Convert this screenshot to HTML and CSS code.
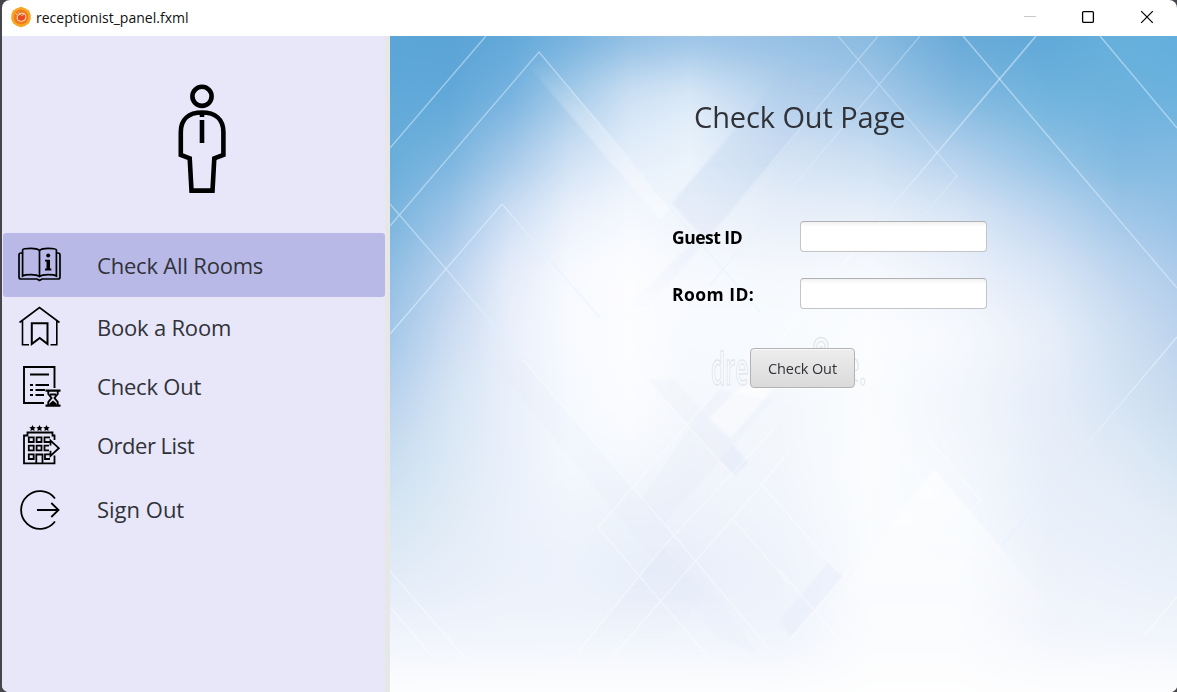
FILE: index.html
```
<!DOCTYPE html>
<html lang="en">
<head>
<meta charset="utf-8">
<title>receptionist_panel.fxml</title>
<link rel="stylesheet" href="styles.css">
</head>
<body>
<div class="window">
  <header class="titlebar">
    <svg class="app-icon" width="22" height="22" viewBox="0 0 22 22">
      <path d="M11 .8 15 2.200 19 4.600 20.600 8.500 20.800 13 19 17.300 15 20 11 21.200 7 20 3 17.300 1.200 13 1.400 8.500 3 4.600 7 2.200Z" fill="#f6a623"/>
      <circle cx="11" cy="11" r="7.300" fill="#f0781e"/>
      <path d="M5.500 7.500 8 9.500Q11 6 14.500 7.500 17 10 15 14 11.500 16.500 8 14.500 6.500 12 7.500 10" fill="#ea4a1c" stroke="#ffe9c8" stroke-width="1"/>
      <path d="M8 6 11.500 9.500 14 8.500" fill="none" stroke="#ffd9a8" stroke-width=".8"/>
    </svg>
    <span class="title">receptionist_panel.fxml</span>
    <div class="controls">
      <svg width="14" height="14" viewBox="0 0 14 14"><path d="M2 6.500H14" stroke="#c9c9c9"/></svg>
      <svg width="14" height="14" viewBox="0 0 14 14"><rect x="1.600" y="1.600" width="10.800" height="10.800" rx="1.200" fill="none" stroke="#000" stroke-width="1.300"/></svg>
      <svg width="14" height="14" viewBox="0 0 14 14"><path d="M1.200 1.200 12.800 12.800M12.800 1.200 1.200 12.800" stroke="#000" stroke-width="1.200"/></svg>
    </div>
  </header>
  <div class="body">
    <aside class="sidebar">
      <svg class="avatar" width="52" height="112" viewBox="0 0 52 112">
        <g fill="none" stroke="#000" stroke-width="4.600">
          <circle cx="26" cy="12.300" r="9.600"/>
          <path d="M4.800 53V48C4.800 35 13 28.500 26 28.500S47.400 35 47.400 48V71L38.300 74.300 36.500 106.600H15.500L13.700 74.300 4.800 71Z"/>
          <path d="M26 29V33M26 36V59"/>
        </g>
      </svg>
      <nav class="menu">
        <a class="item item-rooms active">
          <svg class="icon" width="46" height="40" viewBox="0 0 46 40" fill="none" stroke="#000" stroke-width="1.700">
            <path d="M5 8H4Q2 8 2 10V32Q2 34 4 34H20L22.500 35.500 25 34H41Q43 34 43 32V10Q43 8 41 8H40"/>
            <path d="M22.500 5.500Q20 3.300 14 3.300 5.600 3.300 5.600 5V31Q8 29.700 14 29.700 20 29.700 22.500 31.700 25 29.700 31 29.700 37 29.700 39.400 31V5Q39.400 3.300 31 3.300 25 3.300 22.500 5.500ZM22.500 5.500V31"/>
            <circle cx="31.200" cy="10.500" r="2" fill="#000" stroke="none"/>
            <path d="M28 14.700H33V23.600H34.300V25.400H28V23.600H29.500V16.500H28Z" fill="#000" stroke="none"/>
          </svg>
          <span>Check All Rooms</span>
        </a>
        <a class="item item-book">
          <svg class="icon" width="46" height="42" viewBox="0 0 46 42" fill="none" stroke="#000" stroke-width="1.600">
            <path d="M2.500 16.500 22.500 1.500 42.500 16.500M5.500 14.500V38.800H12M33.500 38.800H39.800V14.500"/>
            <path d="M14.800 17.300H30.500V38L22.700 32 14.800 38Z" stroke-width="2"/>
          </svg>
          <span>Book a Room</span>
        </a>
        <a class="item item-out">
          <svg class="icon" width="46" height="42" viewBox="0 0 46 42" fill="none" stroke="#000" stroke-width="1.900">
            <path d="M37.500 23V2H7V38H27M13 9.500H32M13 20H16M18.500 20H32M13 25H16M18.500 25H28M13 30H16M18.500 30H27"/>
            <path d="M28.500 25.600H43.500M28.500 40.600H43.500" stroke-width="2.200"/>
            <path d="M31.300 26V29L34.500 33 31.300 37V40M40.700 26V29L37.500 33 40.700 37V40M33 29.500H39"/>
            <path d="M32.500 40V38.500L36 35.500 39.500 38.500V40Z" fill="#000" stroke="none"/>
          </svg>
          <span>Check Out</span>
        </a>
        <a class="item item-orders">
          <svg class="icon" width="46" height="42" viewBox="0 0 46 42" fill="none" stroke="#000" stroke-width="1.800">
            <g fill="#000" stroke="none">
              <path id="star" d="M15.500 0 16.500 2.100 18.700 2.300 17.100 3.800 17.600 6 15.500 4.900 13.400 6 13.900 3.800 12.300 2.300 14.500 2.100Z"/>
              <use href="#star" x="7"/><use href="#star" x="14"/>
            </g>
            <path d="M37.500 15V10.500H35.500V7.500H10.500V10.500H7V38.300H37.500V30.500M19.300 38V29.500H25.500V38"/>
            <path d="M11.800 12.300H16.700V17H11.800ZM19.600 12.300H24.500V17H19.600ZM33 12.300H27.500V17H33M11.800 20.700H16.700V25.400H11.800ZM19.600 20.700H24.500V25.400H19.600ZM32 20.700H27.500V25.400H32M11.800 29.300H16.700V34H11.800ZM33 29.300H28V34H33"/>
            <path d="M33.500 20.500V15.500L41.800 23.200 33.500 31V25.800"/>
          </svg>
          <span>Order List</span>
        </a>
        <a class="item item-sign">
          <svg class="icon" width="46" height="42" viewBox="0 0 46 42" fill="none" stroke="#000" stroke-width="1.800">
            <path d="M38 9.500A18.900 18.900 0 1 0 38 32.500M20 21H41.500M34.300 14 41.500 21 34.300 28"/>
          </svg>
          <span>Sign Out</span>
        </a>
      </nav>
    </aside>
    <main class="pane">
      <svg class="defs" width="0" height="0"><filter id="melt" x="0" y="0" width="1" height="1" color-interpolation-filters="sRGB"><feGaussianBlur stdDeviation="0 24"/></filter></svg>
      <div class="sky">
        <i class="r0"></i><i class="r1"></i><i class="r2"></i><i class="r3"></i><i class="r4"></i><i class="r5"></i>
        <i class="r6"></i><i class="r7"></i><i class="r8"></i><i class="r9"></i><i class="r10"></i><i class="r11"></i>
      </div>
      <svg class="facets" width="787" height="656" viewBox="390 36 787 656">
        <defs>
          <linearGradient id="down" gradientUnits="userSpaceOnUse" x1="0" y1="60" x2="0" y2="215"><stop stop-color="#fff" stop-opacity="0"/><stop offset=".35" stop-color="#fff" stop-opacity=".24"/><stop offset="1" stop-color="#fff" stop-opacity=".35"/></linearGradient>
          <linearGradient id="shade" gradientUnits="userSpaceOnUse" x1="0" y1="60" x2="0" y2="320"><stop stop-color="#9dbde2" stop-opacity="0"/><stop offset=".4" stop-color="#a5c2e8" stop-opacity=".22"/><stop offset="1" stop-color="#c5d0e8" stop-opacity="0"/></linearGradient>
          <linearGradient id="peak" gradientUnits="userSpaceOnUse" x1="0" y1="470" x2="0" y2="640"><stop stop-color="#fff" stop-opacity=".6"/><stop offset="1" stop-color="#fff" stop-opacity="0"/></linearGradient>
          <linearGradient id="low" gradientUnits="userSpaceOnUse" x1="0" y1="540" x2="0" y2="650"><stop stop-color="#dfe7f7" stop-opacity=".4"/><stop offset="1" stop-color="#dfe7f7" stop-opacity="0"/></linearGradient>
          <filter id="blur"><feGaussianBlur stdDeviation=".8"/></filter>
        </defs>
        <g filter="url(#blur)">
          <path d="M539 52 672 208 660 220 530 68Z" fill="url(#down)"/>
          <path d="M672 203 800 54 870 46 780 153 630 330 610 325 700 235Z" fill="url(#shade)"/>
          <path d="M490 360 523 360 667 527 757 653 720 640Z" fill="#e5ebf8" opacity=".2"/>
          <path d="M647 380 675 380 750 465 730 473Z" fill="#e9eff8" opacity=".22"/>
          <path d="M663 547 707 594 655 653 577 653Z" fill="url(#low)"/>
          <path d="M717 390 773 400 663 525 640 500Z" fill="#e3eaf6" opacity=".22"/>
          <path d="M709 418 740 387 775 387 731 438Z" fill="#fff" opacity=".5"/>
          <path d="M720 460 733 445 748 463 735 475Z" fill="#dde6f8" opacity=".4"/>
          <path d="M935 470 1057 613 1080 650 790 650Z" fill="url(#peak)"/>
          <path d="M828 563 843 577 790 637 780 620Z" fill="#e3e9f8" opacity=".35"/>
        </g>
        <g fill="none" stroke="#e2f2fd" stroke-width="1.300">
          <path d="M486 36 390 148M390 226 539 52 590 113M390 204 446 269" opacity=".5"/>
          <path d="M590 113 672 210 760 312M446 269 525 362" opacity=".55"/>
          <path d="M390 334 502 204 600 318" opacity=".6"/>
          <path d="M838 36 957 176 925 214M878 36 725 218M920 36 710 285" opacity=".38"/>
          <path d="M1036 36 880 220" opacity=".5" stroke-width="1.800"/>
          <path d="M963 36 1177 288M1100 36 1177 128" opacity=".5" stroke-width="1.500"/>
          <path d="M1177 337 1002 545" opacity=".7"/>
        </g>
        <g fill="none" stroke="#fff" stroke-width="1.200" opacity=".45">
          <path d="M390 571 465 658M390 607 432 656M717 390 598 527 713 663M577 653 663 547 773 430M612 657 760 487 790 450M523 360 667 527 770 650M647 380 730 473M760 483 837 570M780 570 837 637M734 520 790 585M927 437 980 500 957 527M1177 597 1143 637M850 397 935 495M935 470 843 577 790 640M880 220 780 340"/>
        </g>
        <g fill="none" stroke="#e3e6ea" stroke-width="1.400">
          <text class="watermark" transform="translate(711 385) scale(.5 1)">dre</text>
          <text class="watermark" transform="translate(859 385) scale(.6 1)">.</text>
          <path d="M855 359Q859 361 858 369L855 371M855 379 858 382"/>
          <path d="M814 348V345A7 7.500 0 0 1 828 345V348M817 348V346A4 4.500 0 0 1 825 346V348M820 348A1.300 2 0 0 1 822.500 348"/>
        </g>
      </svg>
      <section class="checkout">
        <h1>Check Out Page</h1>
        <form class="form">
          <label for="guest" class="guest-label">Guest ID</label><input id="guest" type="text">
          <label for="room" class="room-label">Room ID:</label><input id="room" type="text">
        </form>
        <button class="submit" type="button">Check Out</button>
      </section>
    </main>
  </div>
</div>
</body>
</html>
```
FILE: styles.css
```
* { box-sizing: border-box; }
body {
  margin: 0;
  height: 692px;
  background: #46454b;
  font-family: "Open Sans", "Noto Sans", sans-serif;
  color: #303238;
  overflow: hidden;
}
.window {
  margin-left: 2px;
  width: 1175px;
  height: 692px;
  display: flex;
  flex-direction: column;
  border-radius: 8px 8px 7px 7px;
  overflow: hidden;
  background: #fff;
}
.titlebar { height: 36px; display: flex; align-items: center; padding: 0 23px 2px 8px; }
.title { margin-left: 4px; font-size: 14px; letter-spacing: 0.02px; color: #111; }
.controls { margin-left: auto; display: flex; gap: 45px; }
.controls svg { display: block; }
.body { display: flex; height: 656px; }

.sidebar {
  width: 388px;
  background: #e8e6f9;
  border-right: 5px solid #e8e7e7;
  padding: 48px 0 0 1px;
}
.avatar { display: block; margin-left: 173px; }
.menu { margin-top: 37px; display: flex; flex-direction: column; }
.item {
  display: flex;
  align-items: center;
  gap: 34px;
  padding-left: 14px;
  font-size: 22px;
  letter-spacing: -0.2px;
  white-space: nowrap;
}
.item .icon { display: block; }
.item-rooms { height: 64px; }
.item-book { height: 60px; }
.item-out { height: 58px; }
.item-orders { height: 62px; letter-spacing: -0.5px; }
.item-sign { height: 66px; letter-spacing: 0; }
.item-orders span, .item-sign span { padding-bottom: 3px; }
.active { background: #b9b9e8; border-radius: 3px; }

.pane { position: relative; width: 787px; overflow: hidden; background: #fff; }
.defs, .sky, .facets { position: absolute; left: 0; top: 0; }
.sky { top: -90px; width: 787px; display: flex; flex-direction: column; filter: url(#melt); }
.sky i { height: 60px; }
.sky .r0 { height: 120px; background: linear-gradient(90deg, #5ba5d7, #5aa3d5 7.6%, #60a8d9 15.2%, #74b1de 22.9%, #8dbce2 30.5%, #98c2e6 38.1%, #94bfe3 49.6%, #87bae0 61%, #67a9d7 72.4%, #5fa8d8 83.9%, #66b0dc 92.8%, #62aedd); }
.sky .r1 { background: linear-gradient(90deg, #5fa9d9, #60a8d9 7.6%, #76b2df 15.2%, #a5cbe9 22.9%, #cfe2f5 30.5%, #dceaf8 38.1%, #b7d2ed 49.6%, #a6c9e9 61%, #81b8df 72.4%, #6eb3dd 83.9%, #6db2dd 92.8%, #6bb2de); }
.sky .r2 { background: linear-gradient(90deg, #69adda, #78b4de 7.6%, #a3c8e9 15.2%, #cee0f4 22.9%, #e4eefa 30.5%, #ebf3fb 38.1%, #d5e3f4 49.6%, #cbdff2 61%, #b3d0ed 72.4%, #90c1e4 83.9%, #7eb8e0 92.8%, #82bae1); }
.sky .r3 { background: linear-gradient(90deg, #78b4dd, #9cc4e8 7.6%, #cedff4 15.2%, #ecf2fc 22.9%, #f5f9fe 30.5%, #f0f5fc 38.1%, #e8eff9 49.6%, #e8eff9 61%, #dbe7f6 72.4%, #bdd5ef 83.9%, #a0c7e8 92.8%, #95c1e6); }
.sky .r4 { background: linear-gradient(90deg, #92bfe4, #bcd3ee 7.6%, #e6edfa 15.2%, #f8faff 22.9%, #fdfdff 30.5%, #f7f9fd 38.1%, #f6f9fd 49.6%, #f8fafe 61%, #edf2fb 72.4%, #dae6f6 83.9%, #c0d6ef 92.8%, #b0cceb); }
.sky .r5 { background: linear-gradient(90deg, #a4c8e9, #ccdcf2 7.6%, #eaf0fb 15.2%, #f8faff 22.9%, #fcfdff 30.5%, #f7fafe 38.1%, #f8fbfe 49.6%, #fbfdff 61%, #f7f9fe 72.4%, #e8eff9 83.9%, #cfe0f2 92.8%, #bed4ed); }
.sky .r6 { background: linear-gradient(90deg, #b9d2ee, #d6e5f4 7.6%, #e9f0fa 15.2%, #f6f9fe 22.9%, #fbfcff 30.5%, #f5f8fc 38.1%, #f4f8fd 49.6%, #fafcfe 61%, #f2f6fc 72.4%, #e6edf9 83.9%, #d4e3f3 92.8%, #c8dbef); }
.sky .r7 { background: linear-gradient(90deg, #c9def0, #dbe8f5 7.6%, #e9f0fb 15.2%, #f5f9fe 22.9%, #f6f9fd 30.5%, #f2f5fb 38.1%, #f3f7fc 49.6%, #fbfcfe 61%, #f4f8fd 72.4%, #e7eef9 83.9%, #e0eaf6 92.8%, #d4e4f2); }
.sky .r8 { background: linear-gradient(90deg, #d6e6f3, #e0ebf6 7.6%, #ebf1fb 15.2%, #eff4fc 22.9%, #edf3fb 30.5%, #edf2fb 38.1%, #f1f5fc 49.6%, #fafcfe 61%, #f5f9fe 72.4%, #e9f0fa 83.9%, #e6eef9 92.8%, #e2ebf6); }
.sky .r9 { background: linear-gradient(90deg, #e1ebf7, #e7eef9 7.6%, #ebf1fa 15.2%, #ecf2fb 22.9%, #e8eff9 30.5%, #e8eefa 38.1%, #eef2fb 49.6%, #f9fbfe 61%, #f9fbfe 72.4%, #eef2fa 83.9%, #ebf1fb 92.8%, #e9f0f9); }
.sky .r10 { background: linear-gradient(90deg, #f0f4fc, #f1f5fc 30%, #f0f4fc 50%, #fbfcfe 61%, #fbfcfe 72%, #f3f6fc 84%, #f1f5fc); }
.sky .r11 { height: 120px; background: #fefefe; }
.watermark { font-family: "Open Sans", sans-serif; font-size: 46px; font-weight: 600; }

.checkout { position: relative; display: flex; flex-direction: column; }
.checkout h1 {
  margin: 60px 0 0 304px;
  font-size: 29px;
  letter-spacing: -0.1px;
  line-height: 42px;
  font-weight: 400;
  white-space: nowrap;
}
.form {
  margin: 83px 0 0 282px;
  display: grid;
  grid-template-columns: 128px 187px;
  row-gap: 26px;
  align-items: center;
}
.form label { font-size: 17.5px; font-weight: 700; color: #000; line-height: 33px; height: 31px; white-space: nowrap; }
.guest-label { letter-spacing: -0.5px; }
.room-label { letter-spacing: 0.45px; }
.form input {
  height: 31px;
  width: 187px;
  border: 1px solid #c3c4c6;
  border-top-color: #b0b1b3;
  border-radius: 4px;
  background: linear-gradient(#f1f1f1, #fff 5px);
  outline: none;
}
.submit {
  margin: 39px 0 0 360px;
  width: 105px;
  height: 40px;
  padding: 0;
  border: 1px solid #b3b3b3;
  border-radius: 4px;
  background: linear-gradient(#ededed, #dadada);
  box-shadow: inset 0 1px 0 #fafafa, 0 1px 0 rgba(255, 255, 255, .7);
  font: 14.5px "Open Sans", sans-serif;
  letter-spacing: -0.1px;
  color: #303238;
}
```
